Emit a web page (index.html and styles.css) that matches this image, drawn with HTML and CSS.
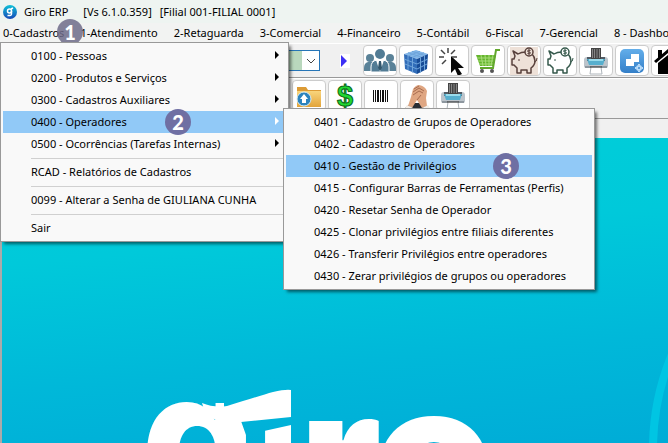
FILE: index.html
```html
<!DOCTYPE html>
<html lang="pt-BR">
<head>
<meta charset="utf-8">
<title>Giro ERP</title>
<link rel="stylesheet" href="styles.css">
</head>
<body>
<svg class="defs" aria-hidden="true">
  <defs>
    <linearGradient id="cyan" x1="0" y1="0" x2="0" y2="1"><stop offset="0" stop-color="#0fc3d8"/><stop offset="1" stop-color="#1648b8"/></linearGradient>
    <linearGradient id="sky" x1="0" y1="0" x2="0" y2="1"><stop offset="0" stop-color="#63aeea"/><stop offset="1" stop-color="#347fc8"/></linearGradient>
    <linearGradient id="folder" x1="0" y1="0" x2="0" y2="1"><stop offset="0" stop-color="#f9d57c"/><stop offset="1" stop-color="#e2a43b"/></linearGradient>
    <symbol id="printer" viewBox="0 0 28 28">
      <path d="M2 13q0-3 3-3h18q3 0 3 3v6q0 2-2 2H4q-2 0-2-2z" fill="#bcc4cb"/>
      <path d="M5 10h18v4H5z" fill="#515b64"/>
      <path d="M9 1h10v12H9z" fill="#444"/>
      <path d="M10.500 2v9M12.500 2v9M15 2v9M17.500 2v9" stroke="#858585" stroke-width="1"/>
      <path d="M5 12h18l-2 6H7z" fill="#57afce"/>
      <path d="M7 12h14v2H7z" fill="#9adcec"/>
      <path d="M3 19h22v2H3z" fill="#8e979f"/>
      <path d="M9 20h10l1 7H8z" fill="#fff" stroke="#aeb5bb"/>
      <path d="M8 20h12" stroke="#333" stroke-width="1"/>
    </symbol>
    <symbol id="pig" viewBox="0 0 28 28">
      <path d="M3 4l5 3q3-2 8-2 8 0 9 9 0 4-4 7v5h-4v-3h-6v3H7v-5l-3-3H2v-6h2l1-3z" stroke-width="1.500" stroke-linejoin="round"/>
      <circle cx="19" cy="5" r="4" stroke-width="1.500"/>
      <path d="M20.500 3.500q-3-1-3 .5 0 1 1.500 1t1.500 1q0 1.500-3 .5M19 2v6M24 15q3 0 3-4M9 12v2" fill="none" stroke-width="1"/>
    </symbol>
    <clipPath id="bowl"><path d="M0 0H84V24L101 36L106 50V80H0z"/></clipPath>
    <clipPath id="stem"><path d="M124 46L151 40V80H124z"/></clipPath>
  </defs>
</svg>
<div class="app">
  <header class="titlebar">
    <svg class="appicon" viewBox="0 0 14 14"><circle cx="7" cy="7" r="7" fill="url(#cyan)"/><circle cx="6.500" cy="6" r="2" fill="none" stroke="#fff" stroke-width="1.500"/><path d="M8 4l2-1M8.500 6v3q0 2-4 1.500" fill="none" stroke="#fff" stroke-width="1.500"/></svg>
    <span class="t-name">Giro ERP</span><span class="t-version">[Vs 6.1.0.359]</span><span>[Filial 001-FILIAL 0001]</span>
  </header>
  <nav class="menubar">
    <button>0-Cadastros</button>
    <button>1-Atendimento</button>
    <button>2-Retaguarda</button>
    <button>3-Comercial</button>
    <button>4-Financeiro</button>
    <button>5-Contábil</button>
    <button>6-Fiscal</button>
    <button>7-Gerencial</button>
    <button>8 - Dashboards</button>
    <span class="step step1">1</span>
  </nav>
  <div class="toolbar">
    <div class="combo"><select aria-label="Filial"><option></option></select><svg viewBox="0 0 10 6"><path d="M1 1l4 4 4-4" fill="none" stroke="#444"/></svg></div>
    <button class="play" aria-label="Executar"><svg viewBox="0 0 8 14"><path d="M1 1l6 6-6 6z" fill="#3c2ff5"/></svg></button>
    <button class="tool" aria-label="Pessoas"><svg class="wide" viewBox="0 0 32 28"><g fill="#5a8298"><circle cx="6" cy="11" r="4"/><circle cx="26" cy="11" r="4"/><path d="M0 24v-3q0-5 4-6h5l3 9zM32 24v-3q0-5-4-6h-5l-3 9z"/></g><path d="M7 25v-5q0-6 6-7h6q6 1 6 7v5z" fill="#527c95" stroke="#fff"/><circle cx="16" cy="7" r="5" fill="#527c95"/><path d="M12 13l4 12 4-12z" fill="#fff"/><path d="M15 14h2l1 7-2 3-2-3z" fill="#31566c"/></svg></button>
    <button class="tool" aria-label="Produtos"><svg viewBox="0 0 28 28"><path d="M2 7l12-4 12 4-11 5z" fill="#83b7e9"/><path d="M2 7l13 5v15L3 22z" fill="#316db9"/><path d="M15 12l11-5-1 15-10 5z" fill="#174c97"/><path d="M6 5.700L19 10M10 4.300L23 8.500M6 9L18 4.300M10 10.500L22 5.700M6 9v14M10.500 10.500v15M18.500 10.500v15M22.500 9v14M2 12l13 5 11-5M3 17l12 5 10-5" fill="none" stroke="#6fa5db" stroke-width="1"/></svg></button>
    <button class="tool" aria-label="Selecionar"><svg viewBox="0 0 28 28"><path d="M13 9l13 12h-6l4 6-4 2-3-7-4 4z" fill="#080808"/><path d="M10 1v5M3 3l4 4M17 3l-4 4M1 10h5M4 17l4-4M14 10h5" stroke="#444" stroke-width="1.500"/></svg></button>
    <button class="tool" aria-label="Compras"><svg viewBox="0 0 28 28"><path d="M2 8h20l-3 11H6z" fill="#65b52e"/><path d="M3 11h18M4 14h17M5 17h15M7 8l2 11M11 8l1 11M15 8v11M19 8l-2 11" stroke="#a8dc79" stroke-width="1"/><path d="M26 3h-4l-3 18H6" fill="none" stroke="#62a72d" stroke-width="2"/><circle cx="8" cy="24" r="2" fill="#555"/><circle cx="18" cy="24" r="2" fill="#555"/></svg></button>
    <button class="tool" aria-label="Contas a pagar"><svg class="pig-brown"><use href="#pig"/></svg></button>
    <button class="tool" aria-label="Contas a receber"><svg class="pig-green"><use href="#pig"/></svg></button>
    <button class="tool" aria-label="Imprimir"><svg><use href="#printer"/></svg></button>
    <button class="tool" aria-label="Módulos"><svg viewBox="0 0 28 28"><rect x="2" y="2" width="24" height="24" rx="5" fill="url(#sky)"/><path d="M13 7h8v8h-5v4H8v-7h5z" fill="#fff"/><circle cx="21" cy="21" r="2" fill="none" stroke="#b9dcfa" stroke-width="2"/><path d="M21 17v1M21 24v1M17 21h1M24 21h1" stroke="#b9dcfa" stroke-width="2"/></svg></button>
    <button class="tool" aria-label="Início"><svg viewBox="0 0 28 28"><path d="M0 14L14 2l14 12-2 2L14 6 2 16z"/><path d="M4 16L14 8l10 8v11H4zM4 3h4v6l-4 3z"/></svg></button>
  </div>
  <div class="toolbar second">
    <button class="tool" aria-label="Enviar arquivo"><svg viewBox="0 0 28 28"><path d="M2 5h9l2 3h13v17H2z" fill="#dc9b35"/><path d="M2 9h24v16H2z" fill="url(#folder)"/><circle cx="9" cy="17" r="7" fill="#2b83bd" stroke="#d8edf8"/><path d="M9 12l4 5H11v4H7v-4H5z" fill="#fff"/></svg></button>
    <button class="tool" aria-label="Financeiro"><svg viewBox="0 0 28 28"><text class="dollar" x="14" y="24" text-anchor="middle">$</text></svg></button>
    <button class="tool" aria-label="Código de barras"><svg viewBox="0 0 28 28"><path d="M6 8h1v12H6zM8 8h1v12H8zM10 8h2v12h-2zM13 8h1v12h-1zM15 8h2v12h-2zM18 8h1v12h-1zM20 8h1v12h-1z" fill="#111"/></svg></button>
    <button class="tool" aria-label="Acordos"><svg viewBox="0 0 28 28"><path d="M2 26l6-5h12l6 5z" fill="#292d34"/><path d="M5 24l3-9 2-8q3-4 6-4 6 1 8 6l-1 7 1 8-5 2-5-8-5 8z" fill="#dfa682"/><path d="M11 7l5-3M10 10l6-4 5 3M10 13l6-4 4 2M14 18l4-5" fill="none" stroke="#a76c50" stroke-width="1"/><path d="M4 23l6 3-2 2-6-2zM25 23l-6 3 2 2 6-2z" fill="#f4eee8"/></svg></button>
    <button class="tool" aria-label="Imprimir relatório"><svg><use href="#printer"/></svg></button>
  </div>
  <main class="workspace">
    <div class="mdi-edge"></div>
    <div class="canvas">
      <svg class="ring" viewBox="0 0 500 500"><circle cx="250" cy="250" r="246" fill="none" stroke="#00c5e3" stroke-width="8"/></svg>
      <svg class="logo" viewBox="0 0 400 58">
        <text x="1" y="116" clip-path="url(#bowl)">g</text>
        <text x="115" y="138" clip-path="url(#stem)">i</text>
        <text class="large" x="158 232" y="145 142">ro</text>
        <path d="M62 18q12 5 25 3 32-10 46-14 13-3 18-2v27l-50 5-16 4-20-13z" fill="#fff"/>
      </svg>
    </div>
  </main>
  <div class="menu main-menu">
    <button>0100 - Pessoas<i></i></button>
    <button>0200 - Produtos e Serviços<i></i></button>
    <button>0300 - Cadastros Auxiliares<i></i></button>
    <button class="active">0400 - Operadores<i></i><span class="step step2">2</span></button>
    <button>0500 - Ocorrências (Tarefas Internas)<i></i></button>
    <hr>
    <button>RCAD - Relatórios de Cadastros</button>
    <hr>
    <button>0099 - Alterar a Senha de GIULIANA CUNHA</button>
    <hr>
    <button>Sair</button>
  </div>
  <div class="menu sub-menu">
    <button>0401 - Cadastro de Grupos de Operadores</button>
    <button>0402 - Cadastro de Operadores</button>
    <button class="active">0410 - Gestão de Privilégios<span class="step step3">3</span></button>
    <button>0415 - Configurar Barras de Ferramentas (Perfis)</button>
    <button>0420 - Resetar Senha de Operador</button>
    <button>0425 - Clonar privilégios entre filiais diferentes</button>
    <button>0426 - Transferir Privilégios entre operadores</button>
    <button>0430 - Zerar privilégios de grupos ou operadores</button>
  </div>
</div>
</body>
</html>
```
FILE: styles.css
```css
* { box-sizing: border-box; }
body { margin: 0; font: 11px/16px "Noto Sans", "Open Sans", sans-serif; color: #000; }
button { font: inherit; color: inherit; border: 0; padding: 0; background: none; white-space: nowrap; }
.defs { position: absolute; width: 0; height: 0; }
.app { position: relative; display: flex; flex-direction: column; min-height: 100vh; overflow: hidden; background: #f0f0f0; }
.titlebar { display: flex; align-items: center; height: 23px; padding-left: 3px; background: #eef4f1; white-space: nowrap; }
.appicon { width: 14px; height: 14px; margin-right: 7px; }
.t-name { margin-right: 15px; }
.t-version { margin-right: 8px; }
.menubar { position: relative; display: flex; gap: 16px; height: 20px; padding-left: 3px; background: #f2f3f2; }
.step { position: absolute; display: grid; place-items: center; width: 26px; height: 26px; border-radius: 50%; background: #6f6fa3; color: #fff; font: 900 20px/24px Lato, sans-serif; }
.step1 { left: 57px; top: -4px; background: #6f6b8ad9; }
.toolbar { display: flex; align-items: center; gap: 2px; height: 35px; padding-left: 240px; border-top: 1px solid #fff; border-bottom: 1px solid #999; }
.combo { position: relative; flex: none; width: 80px; height: 21px; margin-right: 18px; }
.combo select { appearance: none; display: block; width: 100%; height: 100%; border: 1px solid #2675b7; border-radius: 0; background: linear-gradient(90deg, #b9d8bd 61px, #fff 61px); }
.combo svg { position: absolute; right: 4px; top: 8px; width: 10px; height: 6px; }
.play { flex: none; width: 10px; height: 14px; margin-right: 11px; background: #fff; }
.play svg { display: block; width: 8px; height: 14px; }
.tool { flex: none; display: grid; place-items: center; width: 34px; height: 31px; border: 1px solid #ccc; border-radius: 4px; background: #fff; }
.tool svg { width: 28px; height: 28px; }
.tool .wide { width: 32px; }
.second { align-items: flex-start; padding: 1px 0 0 292px; height: 41px; }
.pig-brown { fill: #eee1d8; stroke: #59413c; background: #eee1d8; }
.pig-green { fill: #fff; stroke: #36594c; }
.dollar { font: bold 29px "Liberation Sans", sans-serif; fill: #20d832; stroke: #0a6418; stroke-width: 1px; }
.workspace { flex: 1; display: flex; flex-direction: column; }
.mdi-edge { height: 19px; }
.canvas { position: relative; flex: 1; overflow: hidden; border-left: 2px solid #aaa; background: linear-gradient(175deg, #00cfd8 0%, #00c9da 35%, #00b8d9 70%, #00acd7 100%); }
.ring { position: absolute; right: -481px; top: 61px; width: 500px; height: 500px; }
.logo { position: absolute; left: 138px; bottom: 0; width: 400px; height: 58px; fill: #fff; font: 800 180px Inter, sans-serif; }
.large { font-size: 200px; }
.menu { position: absolute; display: flex; flex-direction: column; padding: 2px; border: 1px solid #999; background: #f9f9f9; box-shadow: 3px 3px 3px -1px #0008; }
.menu button { position: relative; height: 22px; text-align: left; padding-left: 28px; }
.menu .active { background: #91c9f7; }
.menu i { position: absolute; right: 7px; top: 6px; border: 4px solid transparent; border-left-color: #000; border-right: 0; }
.menu .active i { border-left-color: #fff; }
.menu hr { height: 1px; margin: 3px 2px 2px 28px; border: 0; background: #d0d0d0; }
.main-menu { left: 0; top: 42px; width: 289px; }
.sub-menu { left: 283px; top: 108px; width: 312px; }
.step2 { left: 162px; top: -2px; }
.step3 { left: 207px; top: -2px; }
```
